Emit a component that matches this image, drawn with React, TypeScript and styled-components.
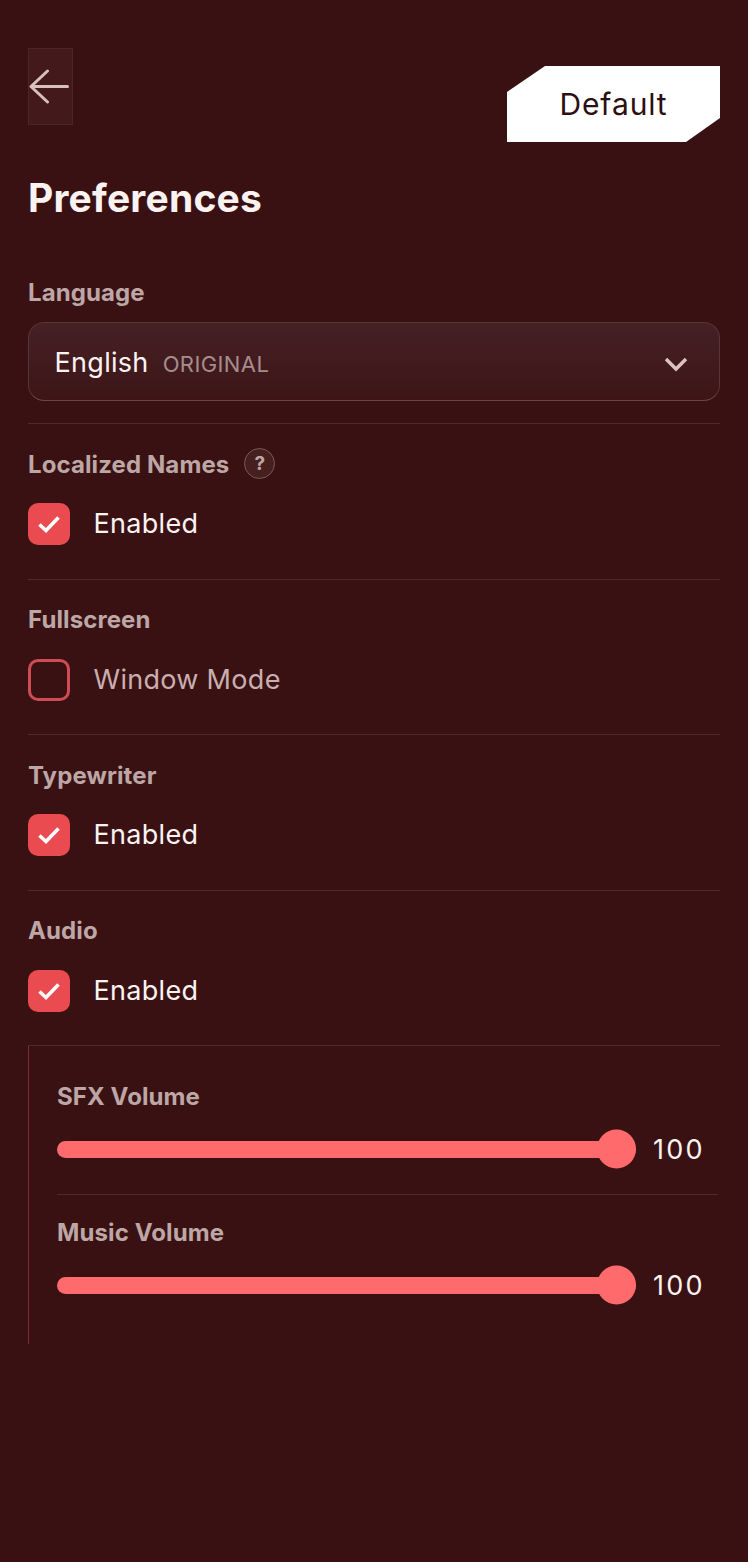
import * as React from "react";
import styled, {createGlobalStyle} from "styled-components";

const colors = {
  bg: "#3a1112",
  label: "#bda7a6",
  text: "#fbf3f2",
  muted: "#c9afaf",
  divider: "#4f2a2b",
  red: "#e94b50",
  slider: "#ff6b6d",
};

const GlobalStyle = createGlobalStyle`
  html, body {
    margin: 0;
    padding: 0;
    background: ${colors.bg};
  }
  body {
    font-family: "Inter", "Liberation Sans", sans-serif;
  }
`;

const Page = styled.div`
  box-sizing: border-box;
  min-height: 1562px;
  padding: 48px 28px 0;
  background: ${colors.bg};
`;

const Header = styled.header`
  display: flex;
  justify-content: space-between;
  align-items: flex-end;
  height: 94px;
`;

const BackButton = styled.button`
  align-self: flex-start;
  box-sizing: border-box;
  width: 45px;
  height: 77px;
  padding: 0 3px 0 0;
  display: flex;
  align-items: center;
  justify-content: center;
  background: #43191b;
  border: 1px solid #4c2526;
  color: #d8c0bc;
`;

const DefaultButton = styled.button`
  width: 213px;
  height: 76px;
  padding: 0;
  border: none;
  background: #fff;
  color: #2c0f12;
  font-family: inherit;
  font-size: 30px;
  font-weight: 400;
  letter-spacing: 0.9px;
  clip-path: polygon(38px 0, 100% 0, 100% 52px, 179px 100%, 0 100%, 0 26px);
`;

const Title = styled.h1`
  margin: 33px 0 0;
  font-size: 39px;
  line-height: 46px;
  font-weight: 700;
  letter-spacing: 0.2px;
  color: ${colors.text};
`;

const Label = styled.div`
  display: flex;
  align-items: center;
  height: 24px;
  font-size: 24px;
  font-weight: 700;
  letter-spacing: 0.1px;
  color: ${colors.label};
`;

const LanguageBlock = styled.section`
  margin-top: 59px;
  padding-bottom: 22px;
  border-bottom: 1px solid ${colors.divider};
`;

const Select = styled.div`
  box-sizing: border-box;
  height: 79px;
  margin-top: 18px;
  padding: 2px 31px 0 25.5px;
  display: flex;
  align-items: center;
  border: 1.5px solid #5a3536;
  border-bottom-color: #6a4647;
  border-radius: 16px;
  background: linear-gradient(180deg, #452024 0%, #3d1517 100%);
`;

const SelectValue = styled.span`
  font-size: 27px;
  letter-spacing: 0.3px;
  color: ${colors.text};
`;

const SelectTag = styled.span`
  margin-left: 14px;
  padding-top: 3px;
  flex: 1;
  font-size: 22px;
  letter-spacing: 0.4px;
  color: #a68c8d;
`;

const Section = styled.section`
  box-sizing: border-box;
  height: 155.5px;
  padding-top: 28px;
  border-bottom: 1px solid ${colors.divider};
`;

const HelpBadge = styled.span`
  box-sizing: border-box;
  width: 31px;
  height: 31px;
  margin: -4px 0 -3px 15px;
  display: flex;
  align-items: center;
  justify-content: center;
  border: 1.5px solid #77595a;
  border-radius: 50%;
  background: #46201f;
  color: ${colors.label};
  font-size: 19px;
  font-weight: 700;
`;

const CheckRow = styled.label`
  display: flex;
  align-items: center;
  margin-top: 27px;
  height: 42px;
`;

const CheckBox = styled.span<{$checked: boolean}>`
  box-sizing: border-box;
  width: 42px;
  height: 42px;
  display: flex;
  align-items: center;
  justify-content: center;
  border-radius: 10px;
  background: ${p => (p.$checked ? colors.red : "transparent")};
  border: ${p => (p.$checked ? "none" : "3px solid #cf4c52")};
`;

const CheckText = styled.span<{$checked: boolean}>`
  margin: -1px 0 0 23.5px;
  font-size: 27px;
  letter-spacing: 0.3px;
  color: ${p => (p.$checked ? colors.text : colors.muted)};
`;

const VolumeGroup = styled.div`
  box-sizing: border-box;
  height: 298px;
  padding: 38px 2px 0 28px;
  border-left: 1px solid #7a2c33;
`;

const VolumeItem = styled.div`
  & + & {
    margin-top: 25px;
    padding-top: 25px;
    border-top: 1px solid ${colors.divider};
  }
`;

const SliderRow = styled.div`
  display: flex;
  align-items: center;
  height: 40px;
  margin-top: 21px;
`;

const SliderTrack = styled.div`
  position: relative;
  flex: 1;
  height: 17px;
  border-radius: 9px;
  background: ${colors.slider};
`;

const SliderThumb = styled.span`
  position: absolute;
  right: 0;
  top: 50%;
  width: 39px;
  height: 39px;
  transform: translateY(-50%);
  border-radius: 50%;
  background: ${colors.slider};
`;

const SliderValue = styled.span`
  width: 65px;
  margin-left: 17px;
  font-size: 27px;
  letter-spacing: 2.2px;
  color: ${colors.text};
`;

const Chevron = styled.svg`
  margin-top: 2px;
`;

const Check = ({label, checked}: {label: string; checked: boolean}) => (
  <CheckRow>
    <CheckBox $checked={checked}>
      {checked && (
        <svg width="24" height="20" viewBox="0 0 24 20" fill="none">
          <path d="M2.5 10.5 L9 16.5 L21.5 3.5" stroke="#fff" strokeWidth="3.6" />
        </svg>
      )}
    </CheckBox>
    <CheckText $checked={checked}>{label}</CheckText>
  </CheckRow>
);

const Volume = ({label}: {label: string}) => (
  <VolumeItem>
    <Label>{label}</Label>
    <SliderRow>
      <SliderTrack>
        <SliderThumb />
      </SliderTrack>
      <SliderValue>100</SliderValue>
    </SliderRow>
  </VolumeItem>
);

export default function App() {
  return (
    <Page>
      <GlobalStyle />
      <Header>
        <BackButton aria-label="Back">
          <svg width="40" height="35" viewBox="0 0 40 35" fill="none" stroke="currentColor" strokeWidth="3" strokeLinecap="round" strokeLinejoin="round">
            <path d="M38.5 17.5 H2 M18.5 2 L2 17.5 L18.5 33" />
          </svg>
        </BackButton>
        <DefaultButton>Default</DefaultButton>
      </Header>
      <Title>Preferences</Title>
      <LanguageBlock>
        <Label>Language</Label>
        <Select>
          <SelectValue>English</SelectValue>
          <SelectTag>ORIGINAL</SelectTag>
          <Chevron width="24" height="16" viewBox="0 0 24 16" fill="none" stroke="#dcc3bf" strokeWidth="3.4">
            <path d="M2 3 L12 13 L22 3" />
          </Chevron>
        </Select>
      </LanguageBlock>
      <Section>
        <Label>
          Localized Names
          <HelpBadge>?</HelpBadge>
        </Label>
        <Check label="Enabled" checked />
      </Section>
      <Section>
        <Label>Fullscreen</Label>
        <Check label="Window Mode" checked={false} />
      </Section>
      <Section>
        <Label>Typewriter</Label>
        <Check label="Enabled" checked />
      </Section>
      <Section>
        <Label>Audio</Label>
        <Check label="Enabled" checked />
      </Section>
      <VolumeGroup>
        <Volume label="SFX Volume" />
        <Volume label="Music Volume" />
      </VolumeGroup>
    </Page>
  );
}
